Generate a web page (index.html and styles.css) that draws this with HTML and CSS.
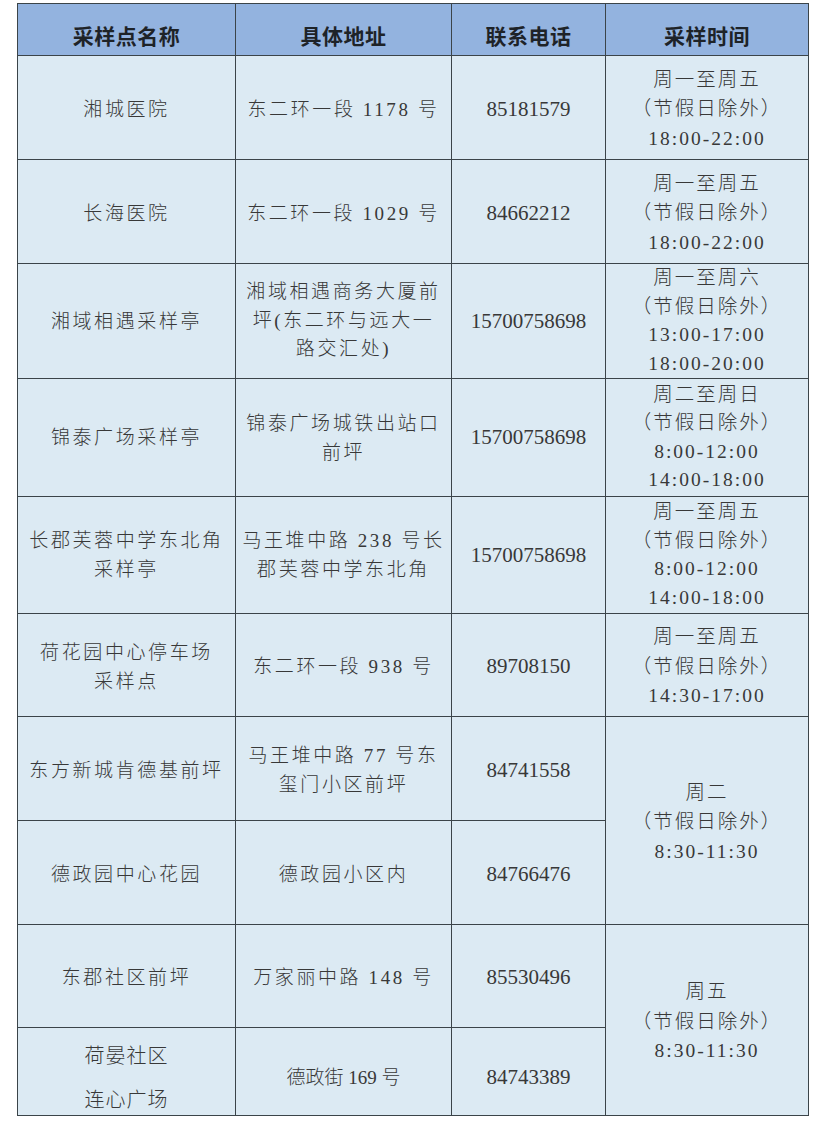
FILE: index.html
```html
<!DOCTYPE html>
<html lang="zh-CN">
<head>
<meta charset="utf-8">
<title>采样点</title>
<link rel="stylesheet" href="styles.css">
</head>
<body>
<table class="sites">
  <colgroup>
    <col class="c-name"><col class="c-addr"><col class="c-tel"><col class="c-time">
  </colgroup>
  <thead>
    <tr class="r-head"><th>采样点名称</th><th>具体地址</th><th>联系电话</th><th>采样时间</th></tr>
  </thead>
  <tbody>
    <tr class="r1 nudge"><td>湘城医院</td><td>东二环一段 1178 号</td><td class="tel">85181579</td><td class="time">周一至周五<br>（节假日除外）<br>18:00-22:00</td></tr>
    <tr class="r2 nudge"><td>长海医院</td><td>东二环一段 1029 号</td><td class="tel">84662212</td><td class="time">周一至周五<br>（节假日除外）<br>18:00-22:00</td></tr>
    <tr class="r3"><td>湘域相遇采样亭</td><td class="addr3">湘域相遇商务大厦前<br>坪(东二环与远大一<br>路交汇处)</td><td class="tel">15700758698</td><td class="time four">周一至周六<br>（节假日除外）<br>13:00-17:00<br>18:00-20:00</td></tr>
    <tr class="r4"><td>锦泰广场采样亭</td><td>锦泰广场城铁出站口<br>前坪</td><td class="tel">15700758698</td><td class="time four">周二至周日<br>（节假日除外）<br>8:00-12:00<br>14:00-18:00</td></tr>
    <tr class="r5"><td>长郡芙蓉中学东北角<br>采样亭</td><td>马王堆中路 238 号长<br>郡芙蓉中学东北角</td><td class="tel">15700758698</td><td class="time four">周一至周五<br>（节假日除外）<br>8:00-12:00<br>14:00-18:00</td></tr>
    <tr class="r6 nudge"><td>荷花园中心停车场<br>采样点</td><td>东二环一段 938 号</td><td class="tel">89708150</td><td class="time">周一至周五<br>（节假日除外）<br>14:30-17:00</td></tr>
    <tr class="r7 nudge"><td>东方新城肯德基前坪</td><td>马王堆中路 77 号东<br>玺门小区前坪</td><td class="tel">84741558</td><td class="time" rowspan="2">周二<br>（节假日除外）<br>8:30-11:30</td></tr>
    <tr class="r8 nudge"><td>德政园中心花园</td><td>德政园小区内</td><td class="tel">84766476</td></tr>
    <tr class="r9 nudge"><td>东郡社区前坪</td><td>万家丽中路 148 号</td><td class="tel">85530496</td><td class="time" rowspan="2">周五<br>（节假日除外）<br>8:30-11:30</td></tr>
    <tr class="r10"><td class="loose"><div>荷晏社区</div><div>连心广场</div></td><td class="narrow">德政街 169 号</td><td class="tel narrow">84743389</td></tr>
  </tbody>
</table>
</body>
</html>
```

FILE: styles.css
```css
html, body {
  margin: 0;
  padding: 0;
  background: #ffffff;
}

body {
  padding: 3px 0 0 17px;
}

.sites {
  table-layout: fixed;
  width: 791px;
  border-collapse: collapse;
  border: 1.5px solid #3b4449;
  font-family: "Liberation Serif", "Noto Sans CJK SC", serif;
  color: #383838;
}

.c-name { width: 218px; }
.c-addr { width: 216px; }
.c-tel { width: 154px; }
.c-time { width: 203px; }

.sites th,
.sites td {
  border: 1.5px solid #3b4449;
  padding: 0;
  text-align: center;
  vertical-align: middle;
}

.sites th {
  background: #93b3df;
  font-family: "Noto Sans CJK SC", sans-serif;
  font-weight: 700;
  font-size: 21px;
  color: #1e2328;
  padding-top: 10px;
  letter-spacing: 0.5px;
}

.sites td {
  background: #dceaf3;
  font-size: 19px;
  font-weight: 300;
  letter-spacing: 2.6px;
  line-height: 29px;
}

.sites .nudge td {
  padding-top: 3px;
}

.sites td.tel {
  font-size: 21px;
  letter-spacing: 0;
}

.sites td.time {
  letter-spacing: 2px;
  font-size: 19.5px;
  line-height: 29.5px;
}

.sites td.time.four {
  line-height: 28.5px;
}

.sites td.addr3 {
  line-height: 28.5px;
}

.sites td.loose {
  line-height: 30px;
  letter-spacing: 1px;
  font-size: 20px;
}

.sites td.loose div + div {
  margin-top: 14px;
}

.sites td.narrow {
  letter-spacing: 0;
}

.sites .r10 td {
  padding-top: 12px;
}

.r-head { height: 52px; }
.r1 { height: 104px; }
.r2 { height: 104px; }
.r3 { height: 115px; }
.r4 { height: 118px; }
.r5 { height: 117px; }
.r6 { height: 103px; }
.r7 { height: 104px; }
.r8 { height: 104px; }
.r9 { height: 103px; }
.r10 { height: 88px; }
```
